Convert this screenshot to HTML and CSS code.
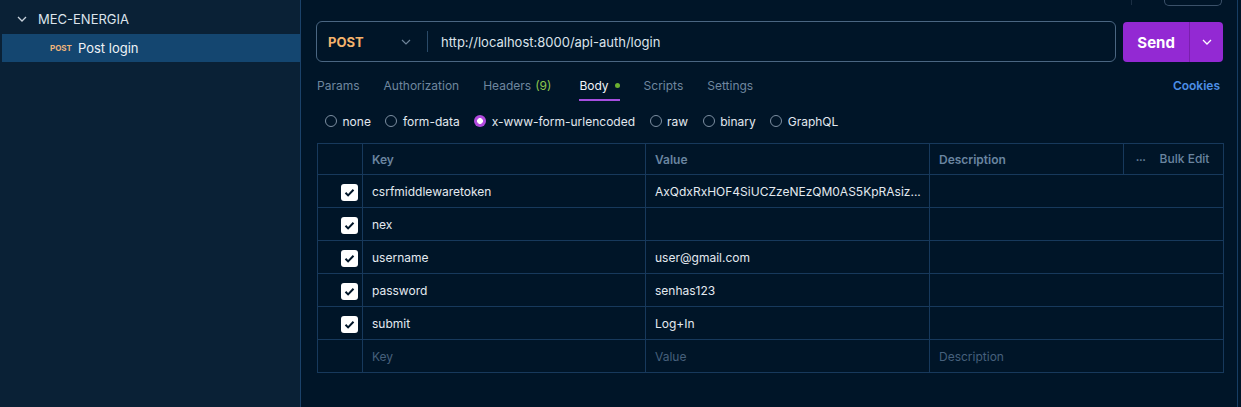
FILE: index.html
```html
<!DOCTYPE html>
<html>
<head>
<meta charset="utf-8">
<link rel="stylesheet" href="styles.css">
</head>
<body>
<div class="app">
  <aside class="sidebar">
    <div class="coll">
      <svg class="chev" width="10" height="6" viewBox="0 0 10 6"><path d="M1 1l4 4 4-4" fill="none" stroke="#c8d2dc" stroke-width="1.3"/></svg>
      <span class="coll-name">MEC-ENERGIA</span>
    </div>
    <div class="req selected">
      <span class="req-method">POST</span>
      <span class="req-name">Post login</span>
    </div>
  </aside>
  <main class="main">
    <div class="topstub">
      <span class="stubdiv"></span>
      <span class="stubbtn"></span>
    </div>
    <div class="urlrow">
      <div class="urlbox">
        <div class="method">
          <span class="method-text">POST</span>
          <svg width="10" height="6" viewBox="0 0 10 6"><path d="M1 1l4 4 4-4" fill="none" stroke="#6d8399" stroke-width="1.2"/></svg>
        </div>
        <span class="urldiv"></span>
        <span class="url">http://localhost:8000/api-auth/login</span>
      </div>
      <div class="send">
        <span class="send-label">Send</span>
        <span class="send-drop"><svg width="10" height="6" viewBox="0 0 10 6"><path d="M1 1l4 4 4-4" fill="none" stroke="#fff" stroke-width="1.3"/></svg></span>
      </div>
    </div>
    <div class="tabs">
      <span class="tab">Params</span>
      <span class="tab">Authorization</span>
      <span class="tab tab-count">Headers <span class="green">(9)</span></span>
      <span class="tab active">Body <span class="dot"></span></span>
      <span class="tab">Scripts</span>
      <span class="tab">Settings</span>
      <span class="cookies">Cookies</span>
    </div>
    <div class="radios">
      <label class="radio"><span class="circ"></span>none</label>
      <label class="radio"><span class="circ"></span>form-data</label>
      <label class="radio"><span class="circ on"></span>x-www-form-urlencoded</label>
      <label class="radio"><span class="circ"></span>raw</label>
      <label class="radio"><span class="circ"></span>binary</label>
      <label class="radio"><span class="circ"></span>GraphQL</label>
    </div>
    <table class="kv">
      <colgroup><col class="c0"><col class="c1"><col class="c2"><col class="c3"><col class="c4"></colgroup>
      <thead>
        <tr><th></th><th>Key</th><th>Value</th><th>Description</th><th class="bulk"><span class="dots">•••</span>Bulk Edit</th></tr>
      </thead>
      <tbody>
        <tr><td class="cb"><span class="check"></span></td><td>csrfmiddlewaretoken</td><td>AxQdxRxHOF4SiUCZzeNEzQM0AS5KpRAsiz...</td><td colspan="2"></td></tr>
        <tr><td class="cb"><span class="check"></span></td><td>nex</td><td></td><td colspan="2"></td></tr>
        <tr><td class="cb"><span class="check"></span></td><td>username</td><td>user@gmail.com</td><td colspan="2"></td></tr>
        <tr><td class="cb"><span class="check"></span></td><td>password</td><td>senhas123</td><td colspan="2"></td></tr>
        <tr><td class="cb"><span class="check"></span></td><td>submit</td><td>Log+In</td><td colspan="2"></td></tr>
        <tr class="ph"><td></td><td>Key</td><td>Value</td><td colspan="2">Description</td></tr>
      </tbody>
    </table>
  </main>
  <div class="rightcol"></div>
</div>
</body>
</html>
```

FILE: styles.css
```css
* { box-sizing: border-box; }
html, body { margin: 0; padding: 0; }
body {
  width: 1241px;
  height: 407px;
  overflow: hidden;
  background: #001528;
  font-family: Inter, "Noto Sans", sans-serif;
  font-size: 13px;
  color: #e2e8ef;
}
.app { display: flex; height: 407px; }

.sidebar {
  width: 301px;
  flex: none;
  background: #0a2136;
  border-right: 1px solid #1b426a;
  padding-top: 6px;
}
.coll {
  height: 28px;
  display: flex;
  align-items: center;
  padding-left: 17px;
  padding-bottom: 2px;
  gap: 11px;
}
.coll-name { color: #dde4ec; font-size: 13px; }
.req {
  height: 28px;
  margin-left: 2px;
  display: flex;
  align-items: center;
  padding-left: 48px;
  gap: 6px;
}
.req.selected { background: #144670; }
.req-method { color: #f0b57a; font-size: 8px; font-weight: 700; }
.req-name { color: #eef2f6; font-size: 13px; }

.main {
  width: 936px;
  flex: none;
  padding: 0 14px 0 16px;
}
.rightcol {
  flex: 1;
  border-left: 1px solid #173d63;
}

.topstub {
  height: 6px;
  display: flex;
  justify-content: flex-end;
  align-items: stretch;
  padding-right: 1px;
  gap: 32px;
}
.stubdiv { width: 1px; height: 5px; background: #1b2f44; }
.stubbtn {
  width: 58px;
  border: 1px solid #3b5169;
  border-top: none;
  border-radius: 0 0 5px 5px;
}

.urlrow {
  margin-top: 15px;
  display: flex;
  gap: 7px;
  height: 41px;
}
.urlbox {
  margin-left: -1px;
  width: 801px;
  border: 1px solid #4a6682;
  border-radius: 6px;
  display: flex;
  align-items: center;
}
.method {
  width: 110px;
  display: flex;
  align-items: center;
  justify-content: space-between;
  padding: 0 16px 0 11px;
}
.method-text { color: #f4b36c; font-weight: 700; font-size: 13px; }
.urldiv { width: 1px; height: 21px; background: #2a4a68; }
.url { padding-left: 13px; color: #dbe3eb; font-size: 13px; }

.send {
  margin-top: 1px;
  width: 100px;
  height: 40px;
  background: #9329d3;
  border-radius: 4px;
  display: flex;
  color: #fff;
}
.send-label {
  width: 67px;
  display: flex;
  align-items: center;
  justify-content: center;
  font-weight: 700;
  font-size: 15px;
  border-right: 1px solid #7a1fae;
}
.send-drop {
  flex: 1;
  display: flex;
  align-items: center;
  justify-content: center;
}

.tabs {
  height: 39px;
  display: flex;
  align-items: stretch;
  gap: 24px;
  font-size: 12px;
  color: #6f879f;
}
.tab {
  display: flex;
  align-items: center;
  gap: 4px;
  border-bottom: 2px solid transparent;
  padding-top: 10px;
}
.tab-count { padding-right: 4px; }
.tab.active { color: #f0f4f8; border-bottom-color: #a64ee0; gap: 6px; }
.green { color: #8fc54c; }
.dot { width: 5px; height: 5px; border-radius: 50%; background: #6bb030; display: inline-block; }
.cookies { margin-left: auto; color: #4d8fe6; font-weight: 600; padding: 10px 3px 2px 0; display: flex; align-items: center; }

.radios {
  height: 42px;
  display: flex;
  align-items: center;
  padding-left: 8px;
  gap: 14.5px;
  padding-bottom: 2px;
}
.radio { display: flex; align-items: center; gap: 5.5px; color: #e2e8ef; font-size: 12px; }
.circ {
  width: 12px; height: 12px;
  border-radius: 50%;
  border: 1.5px solid #7c8ea1;
}
.circ.on {
  border: none;
  background: radial-gradient(circle, #fff 0 2.6px, #b24ade 3.2px);
}

.kv {
  border-collapse: collapse;
  width: 906px;
  table-layout: fixed;
  font-size: 12px;
}
.c0 { width: 45px; }
.c1 { width: 283px; }
.c2 { width: 284px; }
.c3 { width: 194px; }
.c4 { width: 100px; }
.kv th, .kv td {
  border: 1px solid #17395c;
  height: 33px;
  padding: 0 2px 0 9px;
  text-align: left;
  white-space: nowrap;
  overflow: hidden;
}
.kv th { height: 31px; color: #6a85a0; font-weight: 600; padding-top: 1px; }
.kv th.bulk { font-weight: 500; padding-left: 12px; padding-bottom: 2px; }
.dots { font-size: 6px; margin-right: 14px; vertical-align: middle; }
.kv td { color: #e4eaf0; }
.kv td.cb { text-align: right; padding: 2px 4px 0 0; }
.check {
  display: inline-block;
  width: 17px; height: 17px;
  background: #fff;
  border-radius: 3px;
  vertical-align: middle;
  background-image: url("data:image/svg+xml;utf8,<svg xmlns='http://www.w3.org/2000/svg' width='17' height='17' viewBox='0 0 17 17'><path d='M4.5 8.8l2.6 2.6 5.4-5.6' fill='none' stroke='%23001528' stroke-width='2'/></svg>");
}
.kv tr.ph td { color: #46607c; }
```
